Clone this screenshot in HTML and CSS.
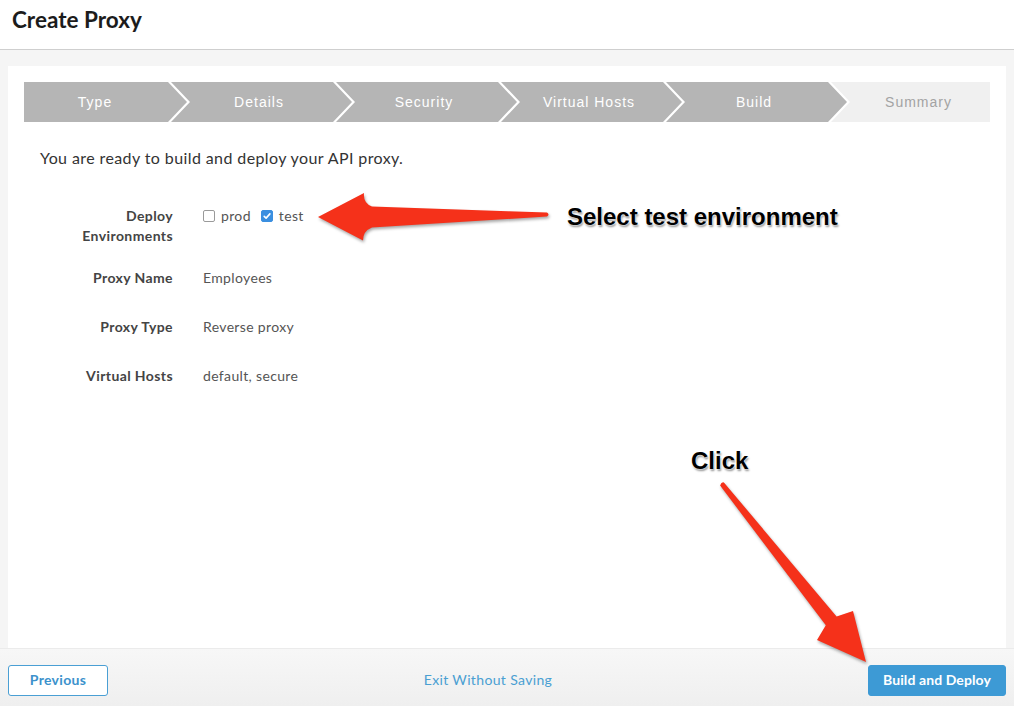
FILE: index.html
```html
<!DOCTYPE html>
<html>
<head>
<meta charset="utf-8">
<link rel="stylesheet" href="styles.css">
</head>
<body>
<header class="topbar">
  <h1 class="title">Create Proxy</h1>
</header>
<main class="main">
  <section class="card">
    <div class="steps">
      <div class="step step-first">Type</div>
      <div class="step step-mid">Details</div>
      <div class="step step-mid">Security</div>
      <div class="step step-mid">Virtual Hosts</div>
      <div class="step step-mid">Build</div>
      <div class="step step-last">Summary</div>
    </div>
    <p class="intro">You are ready to build and deploy your API proxy.</p>
    <div class="form">
      <div class="row row-env">
        <div class="label">Deploy Environments</div>
        <div class="value">
          <span class="check"></span><span class="opt">prod</span>
          <span class="check checked"><svg viewBox="0 0 12 12" width="12" height="12"><path d="M3.2 6.3 L5.1 8.1 L8.9 3.9" fill="none" stroke="#fff" stroke-width="1.6" stroke-linecap="round" stroke-linejoin="round"/></svg></span><span class="opt">test</span>
        </div>
      </div>
      <div class="row">
        <div class="label">Proxy Name</div>
        <div class="value">Employees</div>
      </div>
      <div class="row">
        <div class="label">Proxy Type</div>
        <div class="value">Reverse proxy</div>
      </div>
      <div class="row">
        <div class="label">Virtual Hosts</div>
        <div class="value">default, secure</div>
      </div>
    </div>
  </section>
</main>
<footer class="footer">
  <button class="btn btn-outline">Previous</button>
  <a class="link">Exit Without Saving</a>
  <button class="btn btn-primary">Build and Deploy</button>
</footer>

<svg class="annot-arrows" viewBox="0 0 1014 706" width="1014" height="706">
  <path class="arrow" d="M318 217 L364 193 Q363 203 372 206.5 L547 212.5 Q550 214.5 547 216.5 L372 227.5 Q363 231 363 240.5 Z"/>
  <path class="arrow" d="M866 662 L853 611 L836.6 616.4 L723.9 482.4 Q721.5 481.5 720.1 485.6 L825.8 625.2 L817 640 Z"/>
</svg>
<div class="annot annot-select">Select test environment</div>
<div class="annot annot-click">Click</div>
</body>
</html>
```

FILE: styles.css
```css
* { box-sizing: border-box; }

html, body {
  margin: 0;
  padding: 0;
}

body {
  position: relative;
  width: 1014px;
  height: 706px;
  overflow: hidden;
  background: #f5f5f5;
  font-family: Lato, "Noto Sans", sans-serif;
  color: #333;
}

.topbar {
  height: 50px;
  background: #fff;
  border-bottom: 1px solid #cfcfcf;
  padding: 6px 12px 0;
}

.title {
  margin: 0;
  font-size: 22.5px;
  line-height: 28px;
  font-weight: 700;
  color: #1c1c1c;
}

.main {
  padding: 16px 8px 0;
}

.card {
  height: 582px;
  background: #fff;
  padding: 16px;
}

.steps {
  display: flex;
  height: 40px;
}

.step {
  height: 40px;
  display: flex;
  align-items: center;
  justify-content: center;
  background: #b5b5b5;
  color: #fff;
  font-family: "Liberation Sans", Arial, sans-serif;
  font-size: 14px;
  letter-spacing: 1px;
  white-space: nowrap;
}

.step-first {
  flex: 0 0 163px;
  padding-right: 21px;
  clip-path: polygon(0 0, calc(100% - 19px) 0, 100% 50%, calc(100% - 19px) 100%, 0 100%);
}

.step-mid {
  flex: 0 0 181px;
  margin-left: -16px;
  padding: 0 21px 0 16px;
  clip-path: polygon(0 0, calc(100% - 19px) 0, 100% 50%, calc(100% - 19px) 100%, 0 100%, 19px 50%);
}

.step-last {
  flex: 1 1 auto;
  margin-left: -16px;
  padding-left: 16px;
  background: #f0f0f0;
  color: #a3a3a3;
  clip-path: polygon(0 0, 100% 0, 100% 100%, 0 100%, 19px 50%);
}

.intro {
  margin: 26px 0 0 16px;
  font-size: 16px;
  letter-spacing: 0.4px;
  line-height: 20px;
  color: #333;
}

.form {
  margin-top: 38px;
  padding-left: 16px;
  display: flex;
  flex-direction: column;
  gap: 22px;
}

.row {
  display: flex;
  align-items: flex-start;
  gap: 30px;
  min-height: 27px;
}

.row-env {
  min-height: 40px;
}

.label {
  width: 133px;
  flex: 0 0 133px;
  text-align: right;
  font-size: 14px;
  letter-spacing: 0.4px;
  line-height: 20px;
  font-weight: 700;
  color: #444;
}

.row-env .label {
  padding-left: 40px;
}

.value {
  font-size: 14px;
  letter-spacing: 0.35px;
  line-height: 20px;
  color: #555;
  display: flex;
  align-items: center;
}

.check {
  width: 12px;
  height: 12px;
  border: 1px solid #9a9a9a;
  border-radius: 2px;
  background: #fff;
  margin-right: 6px;
  display: inline-flex;
}

.check.checked {
  background: #3b8fe0;
  border-color: #3b8fe0;
}

.check.checked svg {
  margin: -1px;
}

.opt {
  margin-right: 10px;
}

.footer {
  height: 58px;
  padding: 16px 8px 11px;
  display: flex;
  justify-content: space-between;
  align-items: center;
  background: linear-gradient(#f7f7f7, #efefef);
  border-top: 1px solid #ebebeb;
}

.btn {
  height: 31px;
  padding: 0 0 2px;
  border-radius: 3px;
  font-family: Lato, "Noto Sans", sans-serif;
  font-size: 14px;
  font-weight: 700;
  cursor: pointer;
}

.btn-outline {
  width: 100px;
  letter-spacing: 0.3px;
  background: #fff;
  border: 1px solid #4a9fd4;
  color: #3c92cc;
}

.btn-primary {
  width: 138px;
  letter-spacing: 0.1px;
  background: #3d9ad5;
  border: 1px solid #3d9ad5;
  color: #fff;
}

.link {
  font-size: 14px;
  letter-spacing: 0.35px;
  color: #4a9fd2;
  padding-bottom: 2px;
}

.annot-arrows {
  position: absolute;
  left: 0;
  top: 0;
  pointer-events: none;
}

.arrow {
  fill: #f5311a;
  filter: drop-shadow(1px 2px 1.5px rgba(0, 0, 0, 0.35));
}

.annot {
  position: absolute;
  font-family: "Liberation Sans", Arial, sans-serif;
  font-weight: 700;
  font-size: 24px;
  line-height: 26px;
  color: #000;
  text-shadow: 0 0 2px #fff, 0 0 2px #fff, 1px 2px 2px rgba(0, 0, 0, 0.45);
  white-space: nowrap;
}

.annot-select {
  left: 567px;
  top: 204px;
}

.annot-click {
  left: 691px;
  top: 448px;
}
```
